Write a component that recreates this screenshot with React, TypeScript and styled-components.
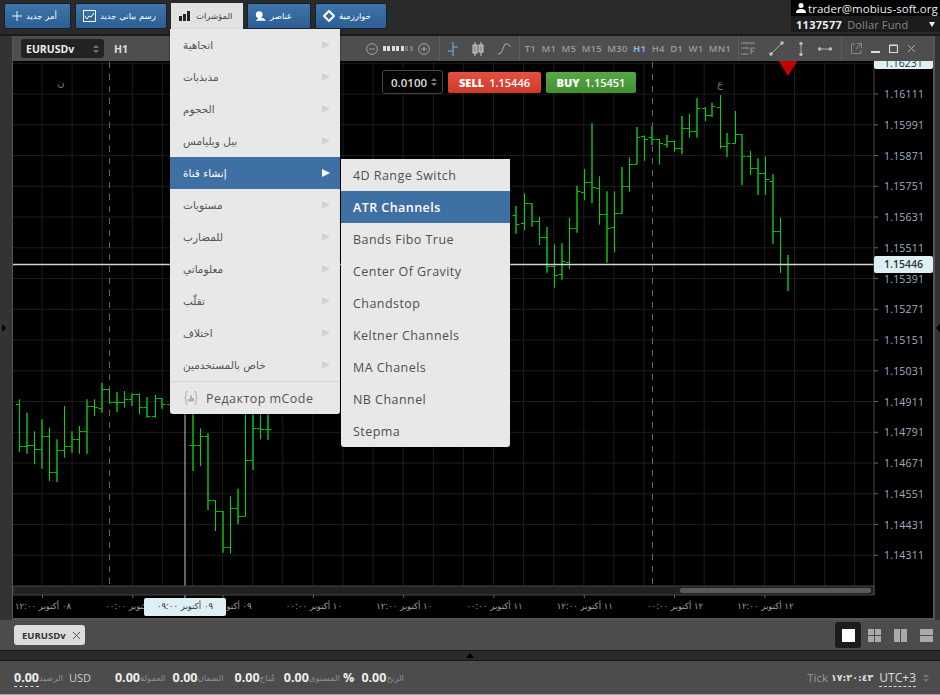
import styled, { createGlobalStyle } from 'styled-components';

const GlobalStyle = createGlobalStyle`
  html, body {
    margin: 0;
    padding: 0;
    background: #2a2a2a;
    overflow: hidden;
  }
  * { box-sizing: border-box; }
`;

const FONT = `"Open Sans", "DejaVu Sans", sans-serif`;
const ARABIC = `"DejaVu Sans", sans-serif`;

const Page = styled.div`
  display: flex;
  flex-direction: column;
  width: 940px;
  height: 695px;
  background: #2a2a2a;
  font-family: ${FONT};
`;

/* top bar */
const TopBar = styled.div`
  display: flex;
  justify-content: space-between;
  height: 36px;
  padding-left: 4px;
  border-bottom: 2px solid #1a1a1a;
`;

const ButtonRow = styled.div`
  display: flex;
  gap: 4px;
  padding-top: 3px;
`;

const TopButton = styled.div<{ $w: number }>`
  display: flex;
  align-items: center;
  gap: 4px;
  width: ${(p) => p.$w}px;
  height: 26px;
  padding-left: 7px;
  border: 1px solid #15202c;
  border-radius: 2px;
  background: linear-gradient(#3f75aa, #2b5e94);
  color: #fff;
  font: 8.5px ${ARABIC};
`;

const MenuAnchor = styled.div`
  position: relative;
  z-index: 5;
`;

const ActiveButton = styled.div`
  display: flex;
  align-items: center;
  gap: 6px;
  width: 72px;
  height: 26px;
  padding-left: 8px;
  background: #e2e2e2;
  color: #444;
  font: 8.5px ${ARABIC};
`;

const Dropdown = styled.div`
  position: absolute;
  top: 26px;
  left: -1px;
  width: 170px;
  background: #e8e8e8;
  border-radius: 0 0 3px 3px;
  box-shadow: 0 1px 2px rgba(0, 0, 0, 0.6);
`;

const MenuRow = styled.div<{ $active?: boolean }>`
  position: relative;
  display: flex;
  align-items: center;
  justify-content: space-between;
  height: 32px;
  padding: 0 10px 0 13px;
  background: ${(p) => (p.$active ? '#3f70a4' : 'transparent')};
  color: ${(p) => (p.$active ? '#fff' : '#555')};
  font: 10.5px ${ARABIC};
`;

const MenuArrow = styled.span<{ $active?: boolean }>`
  width: 0;
  height: 0;
  border-left: 8px solid ${(p) => (p.$active ? '#fff' : '#d2d2d2')};
  border-top: 4px solid transparent;
  border-bottom: 4px solid transparent;
`;

const MenuFoot = styled.div`
  display: flex;
  align-items: center;
  gap: 7px;
  height: 33px;
  padding-left: 13px;
  border-top: 1px solid #d6d6d6;
  color: #555;
  font: 12.5px ${FONT};
  letter-spacing: 0.45px;
`;

const SubMenu = styled.div`
  position: absolute;
  top: 2px;
  left: 171px;
  width: 169px;
  background: #e8e8e8;
  border-radius: 0 0 3px 3px;
  box-shadow: 0 1px 2px rgba(0, 0, 0, 0.6);
`;

const SubRow = styled.div<{ $active?: boolean }>`
  display: flex;
  align-items: center;
  height: 32px;
  padding-left: 12px;
  background: ${(p) => (p.$active ? '#3f70a4' : 'transparent')};
  color: ${(p) => (p.$active ? '#fff' : '#4f4f4f')};
  font: ${(p) => (p.$active ? 600 : 400)} 12.5px ${FONT};
  letter-spacing: 0.45px;
`;

const AccountBox = styled.div`
  display: flex;
  flex-direction: column;
  width: 149px;
  height: 32px;
  background: #1c1c1c;
`;

const AccountUser = styled.div`
  display: flex;
  align-items: center;
  gap: 2px;
  height: 16px;
  padding-left: 5px;
  background: #000;
  color: #eee;
  font-size: 11.5px;
  letter-spacing: 0.05px;
  white-space: nowrap;
  svg { flex: none; }
`;

const AccountLine = styled.div`
  display: flex;
  align-items: center;
  gap: 5px;
  height: 16px;
  padding: 0 5px;
  font-size: 11px;
  color: #888;
  letter-spacing: 0.15px;
  b { color: #eee; font-weight: 700; letter-spacing: 0.3px; }
`;

const DownArrow = styled.span`
  width: 0;
  height: 0;
  margin-left: auto;
  border-top: 5px solid #eee;
  border-left: 3.5px solid transparent;
  border-right: 3.5px solid transparent;
`;

/* chart window */
const Workspace = styled.div`
  display: flex;
  height: 584px;
`;

const LeftGutter = styled.div`
  display: flex;
  align-items: center;
  justify-content: center;
  width: 12px;
  padding-right: 5px;
  background: #333;
`;

const RightGutter = styled.div`
  display: flex;
  align-items: center;
  justify-content: center;
  width: 5px;
  background: #333;
`;

const GutterArrow = styled.span<{ $left?: boolean }>`
  width: 0;
  height: 0;
  border-top: 4px solid transparent;
  border-bottom: 4px solid transparent;
  ${(p) => (p.$left ? 'border-right: 4px solid #000;' : 'border-left: 4px solid #000;')}
`;

const ChartWindow = styled.div`
  display: flex;
  flex-direction: column;
  width: 923px;
  border-right: 2px solid #555;
  border-left: 1px solid #555;
  border-bottom: 2px solid #555;
`;

const ChartToolbar = styled.div`
  display: flex;
  align-items: center;
  flex: none;
  height: 25px;
  padding-left: 8px;
  background: #4e4e4e;
`;

const SymbolSelect = styled.div`
  display: flex;
  align-items: center;
  justify-content: space-between;
  width: 83px;
  height: 19px;
  padding: 0 5px;
  background: #222;
  border-radius: 3px;
  color: #eee;
  font-size: 10.5px;
  font-weight: 700;
`;

const Spinner = styled.span`
  display: flex;
  flex-direction: column;
  gap: 2px;
  i {
    width: 0;
    height: 0;
    border-left: 3px solid transparent;
    border-right: 3px solid transparent;
  }
  i:first-child { border-bottom: 3px solid #777; }
  i:last-child { border-top: 3px solid #777; }
`;

const PeriodBadge = styled.span`
  margin-left: 10px;
  color: #ddd;
  font-size: 10.5px;
  font-weight: 700;
`;

const ToolGroup = styled.div<{ $gap?: number; $first?: boolean; $pad?: number; $right?: number }>`
  display: flex;
  align-items: center;
  gap: ${(p) => p.$gap ?? 0}px;
  height: 25px;
  padding: 0 ${(p) => p.$right ?? p.$pad ?? 7}px 0 ${(p) => p.$pad ?? 7}px;
  ${(p) => (p.$first ? 'margin-left: auto;' : 'border-left: 1px solid #5c5c5c;')}
`;

const ZoomDots = styled.span`
  display: flex;
  gap: 1.5px;
  margin: 0 5px;
`;

const ZoomDot = styled.i<{ $on: boolean }>`
  width: 3px;
  height: 5px;
  background: ${(p) => (p.$on ? '#ddd' : '#777')};
`;

const Period = styled.span<{ $active?: boolean }>`
  color: ${(p) => (p.$active ? '#7fb2e5' : '#9a9a9a')};
  font-size: 9.5px;
  font-weight: ${(p) => (p.$active ? 700 : 600)};
  letter-spacing: 0.2px;
`;

const ChartArea = styled.div`
  position: relative;
  flex: 1;
  background: #000;
  overflow: hidden;
`;

const ChartSvg = styled.svg`
  display: block;
  width: 100%;
  height: 100%;
`;

const TradePanel = styled.div`
  position: absolute;
  top: 9px;
  left: 369px;
  display: flex;
  align-items: center;
  gap: 5px;
`;

const LotBox = styled.div`
  display: flex;
  align-items: center;
  gap: 4px;
  width: 61px;
  height: 24px;
  padding-left: 8px;
  background: #050505;
  border: 1px solid #444;
  border-radius: 3px;
  color: #ddd;
  font-size: 11.5px;
  font-weight: 600;
`;

const TradeButton = styled.div<{ $color: string; $dark: string; $w: number }>`
  display: flex;
  align-items: center;
  justify-content: center;
  gap: 5px;
  width: ${(p) => p.$w}px;
  height: 21px;
  border-radius: 2px;
  background: linear-gradient(${(p) => p.$color}, ${(p) => p.$dark});
  color: #fff;
  font-size: 11px;
  font-weight: 600;
  b { font-weight: 800; }
`;

/* tabs and status */
const TabBar = styled.div`
  display: flex;
  align-items: center;
  justify-content: space-between;
  height: 30px;
  padding: 0 1px 0 14px;
  background: #4c4c4c;
`;

const SymbolTab = styled.div`
  display: flex;
  align-items: center;
  gap: 6px;
  height: 20px;
  padding: 0 4px 0 8px;
  background: #dcdcdc;
  border-radius: 3px;
  color: #333;
  font-size: 9.5px;
  font-weight: 700;
`;

const LayoutRow = styled.div`
  display: flex;
  align-items: center;
`;

const LayoutButton = styled.div<{ $active?: boolean }>`
  display: flex;
  align-items: center;
  justify-content: center;
  width: 26px;
  height: 26px;
  background: ${(p) => (p.$active ? '#1c1c1c' : 'transparent')};
  border-radius: 3px;
`;

const Splitter = styled.div`
  display: flex;
  justify-content: center;
  padding-top: 2px;
  height: 11px;
  background: #2a2a2a;
  border-top: 1px solid #151515;
  border-bottom: 1px solid #151515;
`;

const SplitterArrow = styled.span`
  width: 0;
  height: 0;
  border-bottom: 5px solid #000;
  border-left: 4px solid transparent;
  border-right: 4px solid transparent;
`;

const StatusBar = styled.div`
  display: flex;
  align-items: center;
  height: 34px;
  padding: 0 11px 0 14px;
  background: #4c4c4c;
  border-bottom: 1px solid #98a4b4;
  color: #9a9a9a;
`;

const Amount = styled.span<{ $dotted?: boolean }>`
  color: #eee;
  font-size: 12.5px;
  font-weight: 700;
  ${(p) => p.$dotted && 'border-bottom: 1px dashed #ddd;'}
`;

const Caption = styled.span`
  font: 8.5px ${ARABIC};
  color: #8f8f8f;
`;

const StatGroup = styled.div<{ $gap?: number }>`
  display: flex;
  align-items: center;
  margin-right: ${(p) => p.$gap ?? 9}px;
`;

const Currency = styled.span`
  margin-left: 6px;
  color: #ccc;
  font-size: 11px;
`;

const ClockGroup = styled.div`
  display: flex;
  align-items: center;
  gap: 3px;
  margin-left: auto;
  font-size: 11.5px;
`;

const ClockDigits = styled.span`
  color: #ddd;
  font: 700 9.5px ${ARABIC};
`;

const UtcLabel = styled.span`
  margin: 0 4px 0 3px;
  border-bottom: 1px dashed #ddd;
  color: #ddd;
  font-size: 12px;
`;

/* chart data, in page pixels read off the reference */
type Bar = [number, number, number, number, number, boolean];

const snap = (v: number) => Math.floor(v) + 0.5;

const fromZoom = (rows: number[][], ox: number, oy: number, dimEven: boolean): Bar[] =>
  rows.map(([x, t, b, o, c], i) => {
    const dim = (i % 2 === 0) === dimEven;
    const px = ox + x / 3;
    return [dim ? Math.round(px) : snap(px), oy + t / 3, oy + b / 3, snap(oy + o / 3), snap(oy + c / 3), dim];
  });

const leftBars = fromZoom(
  [
    [58, 85, 243, 100, 225], [80, 125, 248, 225, 222], [103, 181, 280, 222, 235],
    [126, 145, 293, 235, 196], [148, 170, 330, 196, 305], [171, 205, 333, 305, 238],
    [193, 105, 260, 238, 225], [216, 181, 245, 225, 205], [238, 165, 248, 205, 182],
    [261, 85, 248, 182, 105], [284, 85, 135, 105, 108], [306, 35, 125, 113, 55],
    [329, 55, 98, 55, 94], [352, 63, 123, 94, 93], [374, 60, 110, 93, 85],
    [397, 67, 105, 85, 69], [419, 67, 130, 69, 108], [442, 78, 140, 108, 136],
    [465, 72, 140, 136, 82], [487, 82, 113, 82, 100], [510, 10, 120, 100, 10],
    [578, 100, 300, 222, 222], [601, 172, 285, 222, 195], [623, 187, 417, 195, 388],
    [646, 388, 480, 388, 420], [668, 420, 545, 420, 528], [691, 376, 548, 528, 413],
    [714, 353, 460, 413, 436], [737, 100, 436, 436, 267], [759, 100, 297, 267, 171],
    [782, 100, 205, 171, 176], [804, 100, 207, 176, 176],
  ],
  0,
  370,
  false
);

const rightBars = fromZoom(
  [
    [19, 375, 458, 403, 430], [42, 337, 448, 428, 368], [65, 367, 437, 368, 420],
    [88, 407, 492, 420, 470], [110, 438, 575, 470, 555], [133, 490, 620, 555, 582],
    [156, 487, 596, 580, 541], [179, 410, 565, 545, 442], [201, 314, 455, 442, 331],
    [223, 264, 358, 335, 304], [246, 127, 367, 304, 320], [268, 286, 431, 322, 400],
    [291, 331, 545, 400, 442], [313, 331, 514, 440, 397], [336, 258, 398, 397, 317],
    [358, 229, 332, 317, 250], [381, 138, 250, 250, 168], [403, 163, 240, 165, 174],
    [426, 135, 192, 168, 176], [449, 173, 251, 176, 187], [472, 162, 200, 190, 182],
    [494, 180, 212, 182, 202], [517, 105, 220, 202, 142], [539, 99, 170, 142, 151],
    [562, 51, 170, 151, 82], [585, 78, 121, 82, 103], [607, 65, 108, 103, 75],
    [630, 42, 203, 78, 197], [652, 156, 228, 196, 187], [675, 90, 188, 187, 159],
    [697, 159, 313, 159, 227], [720, 210, 282, 227, 262], [743, 232, 342, 262, 277],
    [766, 226, 342, 277, 295], [788, 280, 488, 300, 451], [811, 410, 576, 451, 551],
    [834, 522, 630, 551, 551],
  ],
  510,
  80,
  true
);

const prices = [
  '1.16231', '1.16111', '1.15991', '1.15871', '1.15751', '1.15631', '1.15511', '1.15391',
  '1.15271', '1.15151', '1.15031', '1.14911', '1.14791', '1.14671', '1.14551', '1.14431', '1.14311',
];
const priceY = (i: number) => 62.3 + i * 30.75;
const gridX = Array.from({ length: 28 }, (_, i) => 42 + i * 30.1);

const times = [
  '٠٨ أكتوبر ١٢:٠٠', '٠٩ أكتوبر ٠٠:٠٠', '٠٩ أكتوبر ١٢:٠٠', '١٠ أكتوبر ٠٠:٠٠',
  '١٠ أكتوبر ١٢:٠٠', '١١ أكتوبر ٠٠:٠٠', '١١ أكتوبر ١٢:٠٠', '١٢ أكتوبر ٠٠:٠٠', '١٢ أكتوبر ١٢:٠٠',
];

const menuItems = [
  'اتجاهية', 'مذبذبات', 'الحجوم', 'بيل ويليامس', 'إنشاء قناة', 'مستويات',
  'للمضارب', 'معلوماتي', 'تقلّب', 'اختلاف', 'خاص بالمستخدمين',
];
const subItems = [
  '4D Range Switch', 'ATR Channels', 'Bands Fibo True', 'Center Of Gravity', 'Chandstop',
  'Keltner Channels', 'MA Chanels', 'NB Channel', 'Stepma',
];
const periods = ['T1', 'M1', 'M5', 'M15', 'M30', 'H1', 'H4', 'D1', 'W1', 'MN1'];

const ChartDrawing = () => (
  <ChartSvg viewBox="13 61 920 555">
    {gridX.map((x) => (
      <line key={x} x1={x} x2={x} y1={61} y2={585} stroke="#1d1d1d" />
    ))}
    {prices.map((p, i) => (
      <line key={p} x1={13} x2={874} y1={priceY(i)} y2={priceY(i)} stroke="#1d1d1d" />
    ))}
    <line x1={109.5} x2={109.5} y1={61} y2={585} stroke="#666" strokeDasharray="6 6" />
    <line x1={652.5} x2={652.5} y1={61} y2={585} stroke="#666" strokeDasharray="6 6" />
    {[...leftBars, ...rightBars].map(([x, t, b, o, c, dim]) => (
      <g key={x} stroke={dim ? '#0a8f0a' : '#00d800'}>
        <line x1={x} x2={x} y1={t} y2={b} strokeWidth={dim ? 2 : 1} />
        <line x1={x - 3.5} x2={x} y1={o} y2={o} stroke="#00c000" />
        <line x1={x} x2={x + 3.5} y1={c} y2={c} stroke="#00c000" />
      </g>
    ))}
    <text x={61} y={85} fill="#777" fontSize={10} fontFamily={ARABIC} textAnchor="middle">ن</text>
    <text x={720} y={86} fill="#777" fontSize={10} fontFamily={ARABIC} textAnchor="middle">ع</text>
    <polygon points="778,59 798,59 788,75" fill="#c40000" />
    <line x1={13} x2={874} y1={263.5} y2={263.5} stroke="#cfd6d6" strokeWidth={1.4} />
    <line x1={185} x2={185} y1={61} y2={597} stroke="#a8a8a8" strokeWidth={1.2} />

    <rect x={13} y={585} width={861} height={9} fill="#222" stroke="#444" />
    <rect x={680} y={587} width={191} height={5} rx={2} fill="#5a5a5a" />
    <line x1={874} x2={874} y1={61} y2={594} stroke="#444" />
    {prices.map((p, i) => (
      <g key={p}>
        <line x1={874} x2={878} y1={priceY(i)} y2={priceY(i)} stroke="#666" />
        <text x={884} y={priceY(i) + 4} fill="#9fb0c0" fontSize={10.5} fontFamily={FONT} letterSpacing={0.2}>{p}</text>
      </g>
    ))}
    <rect x={874} y={54} width={59} height={14} rx={2} fill="#dff0f5" />
    <text x={884} y={66} fill="#333" fontSize={10.5} fontFamily={FONT}>1.16231</text>
    <rect x={874} y={255} width={59} height={17} rx={2} fill="#dff0f5" />
    <text x={884} y={267} fill="#333" fontSize={10.5} fontFamily={FONT} fontWeight={600}>1.15446</text>

    {times.map((t, i) => (
      <g key={t}>
        <line x1={42.5 + i * 90.3} x2={42.5 + i * 90.3} y1={594} y2={597} stroke="#666" />
        <text x={43 + i * 90.3} y={608} fill="#a0a0a0" fontSize={8.5} fontFamily={ARABIC} textAnchor="middle" direction="rtl">{t}</text>
      </g>
    ))}
    <rect x={144} y={597} width={82} height={18} rx={2} fill="#dff0f5" />
    <text x={185} y={608} fill="#333" fontSize={8.5} fontFamily={ARABIC} textAnchor="middle" direction="rtl">٠٩ أكتوبر ٠٩:٠٠</text>
  </ChartSvg>
);

const line = { fill: 'none', strokeWidth: 1 } as const;

const BarsMenuIcon = () => (
  <svg width="11" height="10" viewBox="0 0 11 10" fill="#222">
    <rect x="0" y="5" width="3" height="5" />
    <rect x="4" y="3" width="3" height="7" />
    <rect x="8" y="0" width="3" height="10" />
  </svg>
);

const MCodeIcon = () => (
  <svg width="16" height="14" viewBox="0 0 16 14" fill="none" stroke="#aaa">
    <path d="M4.5.5H4Q3 .5 3 1.5V5.5Q3 7 1.5 7 3 7 3 8.5V12.5Q3 13.5 4 13.5H4.5" />
    <path d="M11.5.5H12Q13 .5 13 1.5V5.5Q13 7 14.5 7 13 7 13 8.5V12.5Q13 13.5 12 13.5H11.5" />
    <path d="M6 8v2.5M8 4.5v6M10 7v3.5" stroke="#777" />
  </svg>
);

const CircleGlyph = ({ plus }: { plus?: boolean }) => (
  <svg width="12" height="12" viewBox="0 0 13 13" stroke="#aaa" fill="none">
    <circle cx="6.5" cy="6.5" r="5.8" />
    <path d="M3.5 6.5h6" />
    {plus && <path d="M6.5 3.5v6" />}
  </svg>
);

const TileIcon = ({ cols, rows, color }: { cols: number; rows: number; color: string }) => (
  <svg width="13" height="13" viewBox="0 0 13 13" fill={color}>
    {Array.from({ length: cols * rows }, (_, i) => {
      const w = (13 - (cols - 1)) / cols;
      const h = (13 - (rows - 1)) / rows;
      return <rect key={i} x={(i % cols) * (w + 1)} y={Math.floor(i / cols) * (h + 1)} width={w} height={h} />;
    })}
  </svg>
);

export default function App() {
  return (
    <>
      <GlobalStyle />
      <Page>
        <TopBar>
          <ButtonRow>
            <TopButton $w={67}>
              <svg width="10" height="10" viewBox="0 0 11 11" stroke="#fff"><path d="M5.5 0v11M0 5.5h11" /></svg>
              <span>أمر جديد</span>
            </TopButton>
            <TopButton $w={92}>
              <svg width="13" height="12" viewBox="0 0 13 12" fill="none" stroke="#fff">
                <rect x=".5" y=".5" width="12" height="11" />
                <path d="M2 6l2 3 2-3 2 1 3-4" />
              </svg>
              <span>رسم بياني جديد</span>
            </TopButton>
            <MenuAnchor>
              <ActiveButton>
                <BarsMenuIcon />
                <span>المؤشرات</span>
              </ActiveButton>
              <Dropdown>
                {menuItems.map((item, i) => (
                  <MenuRow key={item} $active={i === 4}>
                    <span>{item}</span>
                    <MenuArrow $active={i === 4} />
                    {i === 4 && (
                      <SubMenu>
                        {subItems.map((sub, j) => (
                          <SubRow key={sub} $active={j === 1}>{sub}</SubRow>
                        ))}
                      </SubMenu>
                    )}
                  </MenuRow>
                ))}
                <MenuFoot>
                  <MCodeIcon />
                  Редактор mCode
                </MenuFoot>
              </Dropdown>
            </MenuAnchor>
            <TopButton $w={64}>
              <svg width="11" height="10" viewBox="0 0 13 11" fill="#fff">
                <circle cx="5" cy="4" r="4" />
                <path d="M1 11l3-3h6l3 3z" />
              </svg>
              <span>عناصر</span>
            </TopButton>
            <TopButton $w={72}>
              <svg width="12" height="12" viewBox="0 0 12 12" fill="none" stroke="#fff" strokeWidth="2">
                <path d="M6 1l5 5-5 5-5-5z" />
              </svg>
              <span>خوارزمية</span>
            </TopButton>
          </ButtonRow>
          <AccountBox>
            <AccountUser>
              <svg width="10" height="10" viewBox="0 0 10 10" fill="#fff">
                <circle cx="5" cy="2.6" r="2.5" />
                <path d="M0 10c0-3 2-4 5-4s5 1 5 4z" />
              </svg>
              trader@mobius-soft.org
            </AccountUser>
            <AccountLine>
              <b>1137577</b> Dollar Fund
              <DownArrow />
            </AccountLine>
          </AccountBox>
        </TopBar>

        <Workspace>
          <LeftGutter><GutterArrow /></LeftGutter>
          <ChartWindow>
            <ChartToolbar>
              <SymbolSelect>
                EURUSDv
                <Spinner><i /><i /></Spinner>
              </SymbolSelect>
              <PeriodBadge>H1</PeriodBadge>
              <ToolGroup $first $pad={9}>
                <CircleGlyph />
                <ZoomDots>
                  {[1, 1, 1, 1, 1, 0, 0].map((on, i) => (
                    <ZoomDot key={i} $on={on === 1} />
                  ))}
                </ZoomDots>
                <CircleGlyph plus />
              </ToolGroup>
              <ToolGroup $gap={14} $pad={8} $right={7}>
                <svg width="10" height="14" viewBox="0 0 10 14" {...line} stroke="#7fb2e5"><path d="M5 0v14M0 9h5M5 5h5" /></svg>
                <svg width="12" height="14" viewBox="0 0 12 14" fill="#999" stroke="#ccc"><path d="M3 0v14M9 0v14" /><rect x="1" y="3" width="4" height="8" /><rect x="7" y="3" width="4" height="7" /></svg>
                <svg width="14" height="12" viewBox="0 0 14 12" {...line} stroke="#aaa"><path d="M0 11l3-1 4-9h3l3 3" /></svg>
              </ToolGroup>
              <ToolGroup $gap={5.5} $pad={5} $right={7}>
                {periods.map((p) => (
                  <Period key={p} $active={p === 'H1'}>{p}</Period>
                ))}
              </ToolGroup>
              <ToolGroup $gap={14} $pad={2} $right={9}>
                <svg width="14" height="13" viewBox="0 0 14 13" stroke="#999" fill="none"><path d="M0 1h14M0 6h8M0 12h7M10 12V6h4M10 9h3" /></svg>
                <svg width="15" height="15" viewBox="0 0 15 15" stroke="#aaa" fill="#ccc"><path d="M2 13L13 2" /><circle cx="2" cy="13" r="1.4" /><circle cx="13" cy="2" r="1.4" /></svg>
                <svg width="6" height="14" viewBox="0 0 6 14" stroke="#aaa" fill="#ccc"><path d="M3 1v12" /><circle cx="3" cy="1.6" r="1.4" /><circle cx="3" cy="12.4" r="1.4" /></svg>
                <svg width="14" height="6" viewBox="0 0 14 6" stroke="#aaa" fill="#ccc"><path d="M1 3h12" /><circle cx="1.6" cy="3" r="1.4" /><circle cx="12.4" cy="3" r="1.4" /></svg>
              </ToolGroup>
              <ToolGroup $gap={9} $pad={9} $right={17}>
                <svg width="11" height="11" viewBox="0 0 11 11" stroke="#888" fill="none"><path d="M4 1H.5v9.5H10V7M6 .5h4.5V5M10.5.5L5 6" /></svg>
                <svg width="9" height="9" viewBox="0 0 9 9" stroke="#ddd" strokeWidth="2"><path d="M0 8h9" /></svg>
                <svg width="9" height="9" viewBox="0 0 9 9" stroke="#ddd" fill="none"><path d="M.5 1.5h8v7h-8zM.5 1h8" strokeWidth="1.2" /></svg>
                <svg width="9" height="9" viewBox="0 0 9 9" stroke="#aaa"><path d="M1 1l7 7M8 1L1 8" /></svg>
              </ToolGroup>
            </ChartToolbar>
            <ChartArea>
              <ChartDrawing />
              <TradePanel>
                <LotBox>
                  0.0100
                  <Spinner><i /><i /></Spinner>
                </LotBox>
                <TradeButton $color="#e5503f" $dark="#cf3a2b" $w={93}><b>SELL</b> 1.15446</TradeButton>
                <TradeButton $color="#57a845" $dark="#438f33" $w={90}><b>BUY</b> 1.15451</TradeButton>
              </TradePanel>
            </ChartArea>
          </ChartWindow>
          <RightGutter><GutterArrow $left /></RightGutter>
        </Workspace>

        <TabBar>
          <SymbolTab>
            EURUSDv
            <svg width="9" height="9" viewBox="0 0 9 9" stroke="#555"><path d="M1 1l7 7M8 1L1 8" /></svg>
          </SymbolTab>
          <LayoutRow>
            <LayoutButton $active><TileIcon cols={1} rows={1} color="#fff" /></LayoutButton>
            <LayoutButton><TileIcon cols={2} rows={2} color="#aaa" /></LayoutButton>
            <LayoutButton><TileIcon cols={2} rows={1} color="#aaa" /></LayoutButton>
            <LayoutButton><TileIcon cols={1} rows={2} color="#aaa" /></LayoutButton>
          </LayoutRow>
        </TabBar>
        <Splitter><SplitterArrow /></Splitter>
        <StatusBar>
          <StatGroup $gap={24}>
            <Amount $dotted>0.00</Amount>
            <Caption>الرصيد</Caption>
            <Currency>USD</Currency>
          </StatGroup>
          <StatGroup $gap={7}><Amount>0.00</Amount><Caption>العمولة</Caption></StatGroup>
          <StatGroup $gap={11}><Amount>0.00</Amount><Caption>الضمان</Caption></StatGroup>
          <StatGroup><Amount>0.00</Amount><Caption>مُتاح</Caption></StatGroup>
          <StatGroup $gap={7}>
            <Amount>0.00</Amount>
            <Caption>المستوى</Caption>
            <Amount>&nbsp;%</Amount>
          </StatGroup>
          <StatGroup><Amount>0.00</Amount><Caption>الربح</Caption></StatGroup>
          <ClockGroup>
            Tick
            <ClockDigits>١٧:٢٠:٤٣</ClockDigits>
            <UtcLabel>UTC+3</UtcLabel>
            <Spinner><i /><i /></Spinner>
          </ClockGroup>
        </StatusBar>
      </Page>
    </>
  );
}
